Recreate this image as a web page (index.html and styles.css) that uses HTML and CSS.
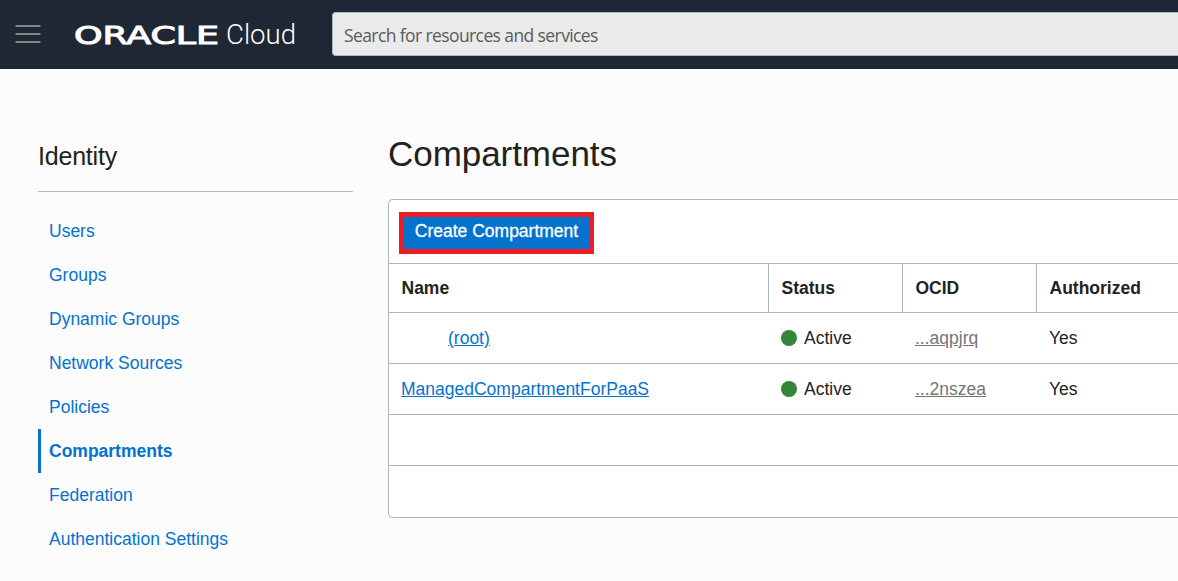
FILE: index.html
```html
<!DOCTYPE html>
<html lang="en">
<head>
<meta charset="utf-8">
<title>Compartments</title>
<link rel="stylesheet" href="styles.css">
</head>
<body>
<header class="topbar">
  <svg class="menu" width="26" height="20" viewBox="0 0 26 20" aria-label="Menu"><path d="M.5 2H25.500M.5 10H25.500M.5 18H25.500" stroke="#a3a3a3" stroke-width="1.6"/></svg>
  <svg class="logo" width="225" height="30" viewBox="0 0 225 30">
    <text class="logo-oracle" x="0" y="23.500" textLength="145" lengthAdjust="spacingAndGlyphs">ORACLE</text>
    <text class="logo-cloud" x="152" y="24" textLength="70" lengthAdjust="spacingAndGlyphs">Cloud</text>
  </svg>
  <div class="search"><span class="search-text">Search for resources and services</span></div>
</header>
<div class="page">
  <aside class="sidebar">
    <h2 class="side-title">Identity</h2>
    <nav class="side-nav">
      <a class="nav-item">Users</a>
      <a class="nav-item">Groups</a>
      <a class="nav-item">Dynamic Groups</a>
      <a class="nav-item">Network Sources</a>
      <a class="nav-item">Policies</a>
      <a class="nav-item active">Compartments</a>
      <a class="nav-item">Federation</a>
      <a class="nav-item">Authentication Settings</a>
    </nav>
  </aside>
  <main class="main">
    <h1 class="title">Compartments</h1>
    <section class="card">
      <div class="toolbar"><button class="create">Create Compartment</button></div>
      <div class="row head">
        <div class="cell">Name</div><div class="cell">Status</div><div class="cell">OCID</div><div class="cell">Authorized</div>
      </div>
      <div class="row">
        <div class="cell root"><a class="link">(root)</a></div>
        <div class="cell"><span class="dot"></span>Active</div>
        <div class="cell"><a class="ocid">...aqpjrq</a></div>
        <div class="cell">Yes</div>
      </div>
      <div class="row">
        <div class="cell"><a class="link">ManagedCompartmentForPaaS</a></div>
        <div class="cell"><span class="dot"></span>Active</div>
        <div class="cell"><a class="ocid">...2nszea</a></div>
        <div class="cell">Yes</div>
      </div>
      <div class="row"></div>
      <div class="row last"></div>
    </section>
  </main>
</div>
</body>
</html>
```
FILE: styles.css
```css
* { box-sizing: border-box; }
body {
  margin: 0;
  height: 581px;
  overflow: hidden;
  background: #fcfcfc;
  color: #222;
  font: 17.5px/20px "Liberation Sans", Arial, sans-serif;
}
.topbar {
  display: flex;
  align-items: flex-start;
  height: 69px;
  background: #1e2733;
}
.menu { flex: none; margin: 24px 0 0 15px; }
.logo { flex: none; margin: 20px 0 0 33px; overflow: visible; fill: #fff; }
.logo-oracle {
  font: 400 24px "DejaVu Sans", sans-serif;
  stroke: #fff;
  stroke-width: 1px;
}
.logo-cloud { font: 300 27px Roboto, "Open Sans", sans-serif; }
.search {
  flex: 1;
  height: 44px;
  margin: 12px 0 0 33px;
  padding: 0 11px;
  border: 1px solid #aeb6c0;
  border-right: 0;
  border-radius: 4px 0 0 4px;
  background: #eaeaea;
  color: #5b5b5b;
  font: 17.5px/44px "Open Sans", "Noto Sans", sans-serif;
  white-space: nowrap;
}
.search-text { letter-spacing: -0.6px; }
.page { display: flex; }
.sidebar { width: 315px; margin-left: 38px; flex: none; }
.side-title {
  margin: 72px 0 17px;
  height: 51px;
  border-bottom: 1px solid #b4b6c4;
  font-weight: 400;
  font-size: 25px;
  line-height: 31px;
  letter-spacing: -0.2px;
}
.side-nav { display: flex; flex-direction: column; }
.nav-item {
  height: 44px;
  padding-left: 11px;
  color: #0572ce;
  line-height: 44px;
}
.nav-item.active {
  padding-left: 8px;
  border-left: 3px solid #0572ce;
  font-weight: 700;
}
.main { flex: 1; margin-left: 35px; min-width: 0; }
.title {
  margin: 65px 0 25px;
  height: 40px;
  font-weight: 400;
  font-size: 35px;
  line-height: 40px;
  letter-spacing: -0.05px;
}
.card {
  border: 1px solid #aeb4be;
  border-right: 0;
  border-radius: 5px 0 0 5px;
  background: #fff;
  overflow: hidden;
}
.toolbar { height: 64px; padding: 12px 0 0 10px; border-bottom: 1px solid #aeb4be; }
.create {
  display: block;
  width: 195px;
  height: 42px;
  padding: 0 0 4px;
  border: 5px solid #ee1b24;
  background: #0572ce;
  color: #fff;
  font: inherit;
  -webkit-text-stroke: 0.3px #fff;
}
.row {
  display: grid;
  grid-template-columns: 380px 134px 134px 1fr;
  height: 51px;
  border-bottom: 1px solid #aeb4be;
}
.row.head { height: 49px; font-weight: 700; }
.row.last { border-bottom: 0; }
.cell { display: flex; align-items: center; padding-left: 12px; }
.head .cell { border-right: 1px solid #aeb4be; padding-left: 12.5px; }
.head .cell:last-child { border-right: 0; }
.cell.root { padding-left: 59px; }
.dot { width: 16px; height: 16px; margin-right: 7px; border-radius: 50%; background: #358539; }
.link { color: #0572ce; text-decoration: underline; }
.ocid { color: #757575; text-decoration: underline; }
```
